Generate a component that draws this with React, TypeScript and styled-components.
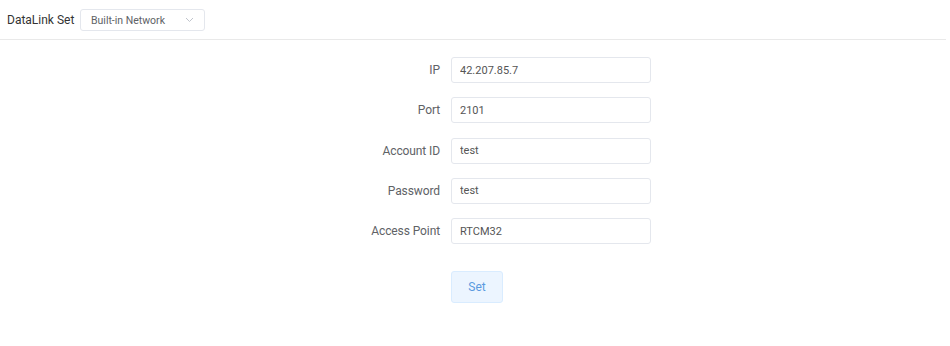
import React from 'react';
import styled, { createGlobalStyle } from 'styled-components';

const GlobalStyle = createGlobalStyle`
  html, body {
    margin: 0;
    padding: 0;
    background: #ffffff;
    font-family: Roboto, "Noto Sans", "Liberation Sans", sans-serif;
  }
`;

const Header = styled.div`
  display: flex;
  align-items: center;
  height: 40px;
  padding-left: 7px;
  margin-right: 4px;
  border-bottom: 1px solid #e9e9e9;
  box-sizing: border-box;
`;

const HeaderTitle = styled.span`
  width: 73px;
  font-size: 12px;
  color: #333;
`;

const SelectBox = styled.div`
  display: flex;
  align-items: center;
  justify-content: space-between;
  width: 125px;
  height: 22px;
  margin-top: 1px;
  padding: 0 10px 0 10px;
  box-sizing: border-box;
  border: 1px solid #e4e7ed;
  border-radius: 3px;
  font-size: 10.5px;
  color: #606266;
`;

const Form = styled.div`
  display: flex;
  flex-direction: column;
  align-items: center;
  padding-top: 17px;
  gap: 14.3px;
`;

const Row = styled.div`
  display: flex;
  align-items: center;
  gap: 11px;
`;

const Label = styled.label`
  width: 141px;
  text-align: right;
  font-size: 12px;
  letter-spacing: -0.1px;
  color: #606266;
`;

const Input = styled.input`
  width: 200px;
  height: 26px;
  box-sizing: border-box;
  border: 1px solid #e4e7ed;
  border-radius: 3px;
  padding: 0 8px;
  font-family: inherit;
  font-size: 11px;
  color: #555;
  outline: none;
`;

const ButtonRow = styled.div`
  display: flex;
  width: 352px;
  padding-left: 152px;
  box-sizing: border-box;
  margin-top: 13px;
`;

const Button = styled.button`
  width: 52px;
  height: 32px;
  border: 1px solid #d9ecff;
  border-radius: 3px;
  background: #ecf5ff;
  color: #5a9be0;
  font-family: inherit;
  font-size: 12px;
  cursor: pointer;
`;

const fields = [
  { label: 'IP', value: '42.207.85.7' },
  { label: 'Port', value: '2101' },
  { label: 'Account ID', value: 'test' },
  { label: 'Password', value: 'test' },
  { label: 'Access Point', value: 'RTCM32' },
];

const Chevron = () => (
  <svg width="9" height="6" viewBox="0 0 9 6" fill="none">
    <path d="M1 1l3.5 3.5L8 1" stroke="#c0c4cc" strokeWidth="1" />
  </svg>
);

const App = (): JSX.Element => (
  <>
    <GlobalStyle />
    <Header>
      <HeaderTitle>DataLink Set</HeaderTitle>
      <SelectBox>
        <span>Built-in Network</span>
        <Chevron />
      </SelectBox>
    </Header>
    <Form>
      {fields.map((f) => (
        <Row key={f.label}>
          <Label>{f.label}</Label>
          <Input defaultValue={f.value} />
        </Row>
      ))}
      <ButtonRow>
        <Button>Set</Button>
      </ButtonRow>
    </Form>
  </>
);

export default App;
